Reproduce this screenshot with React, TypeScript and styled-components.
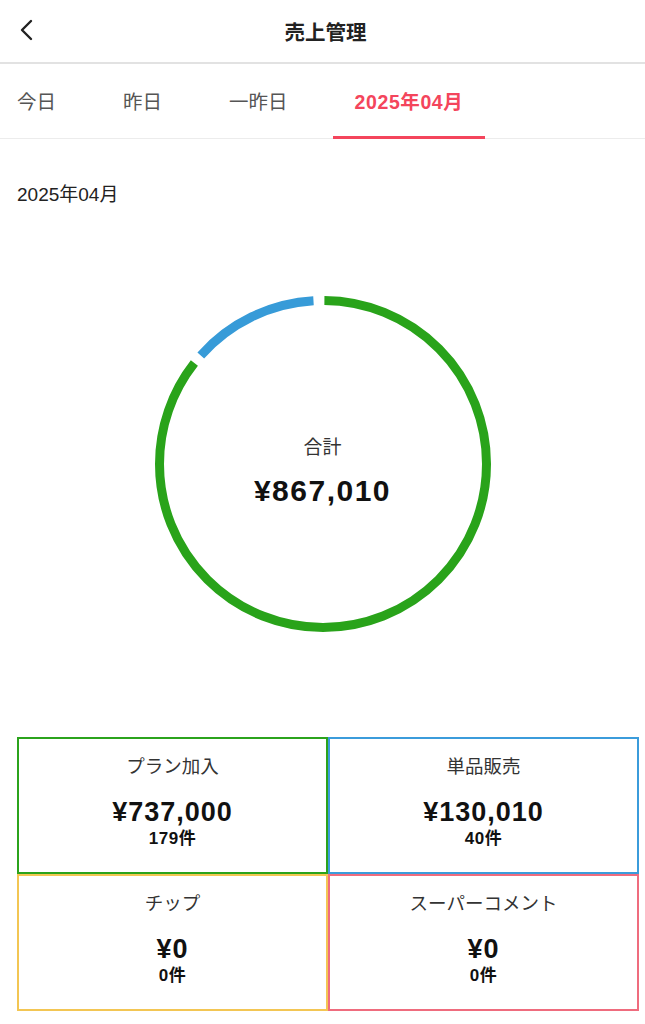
import React from 'react';
import styled, { createGlobalStyle } from 'styled-components';

const GlobalStyle = createGlobalStyle`
  body {
    margin: 0;
    background: #ffffff;
    font-family: "Liberation Sans", "Noto Sans CJK JP", sans-serif;
    color: #222;
  }
`;

const Page = styled.div`
  width: 645px;
  min-height: 1024px;
  background: #fff;
`;

const Header = styled.header`
  position: relative;
  height: 62px;
  display: flex;
  align-items: center;
  justify-content: center;
  border-bottom: 2px solid #e2e2e2;
`;

const BackButton = styled.button`
  position: absolute;
  left: 12px;
  top: 14px;
  width: 30px;
  height: 32px;
  padding: 0;
  border: none;
  background: none;
  display: flex;
  align-items: center;
  justify-content: center;
`;

const Title = styled.h1`
  margin: 0;
  font-size: 20.5px;
  font-weight: 700;
  color: #222;
  padding-left: 6px;
`;

const TabBar = styled.nav`
  height: 74px;
  display: flex;
  gap: 23px;
  border-bottom: 1px solid #ececec;
`;

const Tab = styled.div<{ $active?: boolean }>`
  display: flex;
  align-items: center;
  padding: 0 22px;
  &:first-child {
    padding-left: 17px;
  }
  font-size: 19.5px;
  letter-spacing: ${(p) => (p.$active ? '0.6px' : '0')};
  font-weight: ${(p) => (p.$active ? 700 : 400)};
  color: ${(p) => (p.$active ? '#f4455c' : '#555')};
  border-bottom: 3px solid ${(p) => (p.$active ? '#f4455c' : 'transparent')};
  margin-bottom: -1px;
`;

const PeriodLabel = styled.div`
  margin-top: 45px;
  padding-left: 17px;
  font-size: 19px;
  line-height: 22px;
  color: #222;
`;

const ChartWrap = styled.div`
  position: relative;
  width: 340px;
  height: 340px;
  margin: 88px auto 0;
`;

const ChartCenter = styled.div`
  position: absolute;
  inset: 0;
  display: flex;
  flex-direction: column;
  align-items: center;
  justify-content: center;
  padding-top: 16px;
`;

const TotalLabel = styled.div`
  font-size: 19px;
  color: #333;
  line-height: 24px;
`;

const TotalValue = styled.div`
  margin-top: 14px;
  font-size: 30px;
  font-weight: 700;
  color: #111;
  line-height: 34px;
  letter-spacing: 1.5px;
`;

const CardGrid = styled.section`
  margin: 103px 0 0 17px;
  display: grid;
  grid-template-columns: 311px 311px;
  grid-auto-rows: 137px;
`;

const Card = styled.div<{ $color: string }>`
  border: 2.5px solid ${(p) => p.$color};
  display: flex;
  flex-direction: column;
  align-items: center;
  padding-top: 17px;
  box-sizing: border-box;
`;

const CardTitle = styled.div`
  font-size: 18.5px;
  line-height: 22px;
  color: #333;
`;

const CardAmount = styled.div`
  margin-top: 19px;
  font-size: 27px;
  line-height: 30px;
  font-weight: 700;
  letter-spacing: 1px;
  color: #111;
`;

const CardCount = styled.div`
  margin-top: 1px;
  font-size: 17px;
  line-height: 22px;
  font-weight: 700;
  letter-spacing: 0.5px;
  color: #111;
`;

const R = 163.5;
const C = 2 * Math.PI * R;

const arc = (from: number, to: number) => ({
  strokeDasharray: `${((to - from) / 360) * C} ${C}`,
  strokeDashoffset: `${(-from / 360) * C}`,
});

const Donut = () => (
  <svg width="340" height="340" viewBox="0 0 340 340">
    <g transform="rotate(-90 170 170)">
      <circle cx="170" cy="170" r={R} fill="none" stroke="#29a31a" strokeWidth="9" {...arc(0.5, 308)} />
      <circle cx="170" cy="170" r={R} fill="none" stroke="#379bd8" strokeWidth="9" {...arc(311.5, 356.5)} />
    </g>
  </svg>
);

const cards = [
  { title: 'プラン加入', amount: '¥737,000', count: '179件', color: '#2ba31c' },
  { title: '単品販売', amount: '¥130,010', count: '40件', color: '#3b9cdb' },
  { title: 'チップ', amount: '¥0', count: '0件', color: '#f3c653' },
  { title: 'スーパーコメント', amount: '¥0', count: '0件', color: '#ef6c7e' },
];

const tabs = ['今日', '昨日', '一昨日', '2025年04月'];

export default function App() {
  return (
    <Page>
      <GlobalStyle />
      <Header>
        <BackButton aria-label="戻る">
          <svg width="16" height="22" viewBox="0 0 16 22">
            <polyline points="12,2 3,11 12,20" fill="none" stroke="#222" strokeWidth="2.4" strokeLinecap="round" strokeLinejoin="round" />
          </svg>
        </BackButton>
        <Title>売上管理</Title>
      </Header>
      <TabBar>
        {tabs.map((t, i) => (
          <Tab key={t} $active={i === 3}>{t}</Tab>
        ))}
      </TabBar>
      <main>
        <PeriodLabel>2025年04月</PeriodLabel>
        <ChartWrap>
          <Donut />
          <ChartCenter>
            <TotalLabel>合計</TotalLabel>
            <TotalValue>¥867,010</TotalValue>
          </ChartCenter>
        </ChartWrap>
        <CardGrid>
          {cards.map((c) => (
            <Card key={c.title} $color={c.color}>
              <CardTitle>{c.title}</CardTitle>
              <CardAmount>{c.amount}</CardAmount>
              <CardCount>{c.count}</CardCount>
            </Card>
          ))}
        </CardGrid>
      </main>
    </Page>
  );
}
